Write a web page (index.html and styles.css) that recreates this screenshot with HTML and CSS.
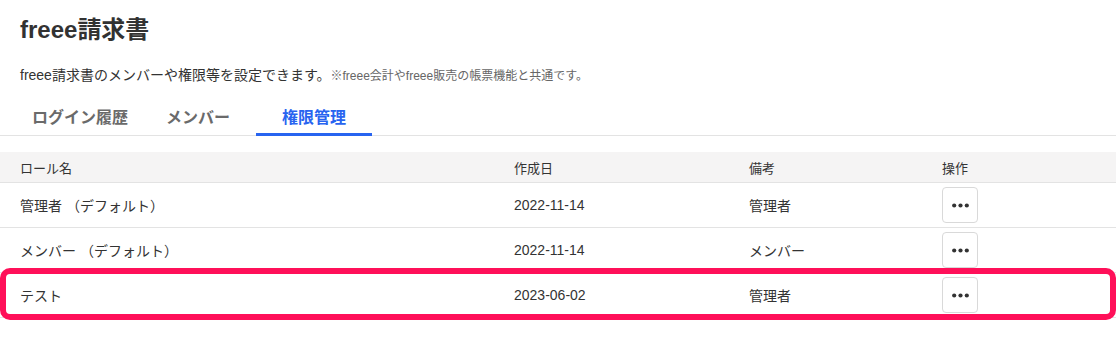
FILE: index.html
```html
<!DOCTYPE html>
<html lang="ja">
<head>
<meta charset="utf-8">
<title>freee請求書</title>
<link rel="stylesheet" href="styles.css">
</head>
<body>
<div class="page">
  <h1 class="title">freee請求書</h1>
  <p class="desc">freee請求書のメンバーや権限等を設定できます。<span class="note">※freee会計やfreee販売の帳票機能と共通です。</span></p>
  <nav class="tabs">
    <span class="tab">ログイン履歴</span>
    <span class="tab">メンバー</span>
    <span class="tab active">権限管理</span>
  </nav>
  <div class="table">
    <div class="row head">
      <div class="cell">ロール名</div>
      <div class="cell">作成日</div>
      <div class="cell">備考</div>
      <div class="cell">操作</div>
    </div>
    <div class="row">
      <div class="cell">管理者 （デフォルト）</div>
      <div class="cell">2022-11-14</div>
      <div class="cell">管理者</div>
      <div class="cell"><button class="more" type="button"><svg width="17" height="5" viewBox="0 0 17 5"><circle cx="2.2" cy="2.5" r="2.1"/><circle cx="8.5" cy="2.5" r="2.1"/><circle cx="14.8" cy="2.5" r="2.1"/></svg></button></div>
    </div>
    <div class="row">
      <div class="cell">メンバー （デフォルト）</div>
      <div class="cell">2022-11-14</div>
      <div class="cell">メンバー</div>
      <div class="cell"><button class="more" type="button"><svg width="17" height="5" viewBox="0 0 17 5"><circle cx="2.2" cy="2.5" r="2.1"/><circle cx="8.5" cy="2.5" r="2.1"/><circle cx="14.8" cy="2.5" r="2.1"/></svg></button></div>
    </div>
    <div class="row highlighted">
      <div class="cell">テスト</div>
      <div class="cell">2023-06-02</div>
      <div class="cell">管理者</div>
      <div class="cell"><button class="more" type="button"><svg width="17" height="5" viewBox="0 0 17 5"><circle cx="2.2" cy="2.5" r="2.1"/><circle cx="8.5" cy="2.5" r="2.1"/><circle cx="14.8" cy="2.5" r="2.1"/></svg></button></div>
      <span class="highlight-frame"></span>
    </div>
  </div>
</div>
</body>
</html>
```

FILE: styles.css
```css
* {
  box-sizing: border-box;
}

html, body {
  margin: 0;
  padding: 0;
  background: #ffffff;
}

body {
  font-family: "Liberation Sans", Arial, "Noto Sans CJK JP", sans-serif;
  color: #333333;
  width: 1116px;
  height: 341px;
  overflow: hidden;
}

.page {
  display: flex;
  flex-direction: column;
}

.title {
  margin: 0;
  padding: 14px 0 0 20px;
  font-size: 24px;
  line-height: 32px;
  font-weight: 700;
  color: #323232;
}

.desc {
  margin: 19px 0 0 0;
  padding-left: 20px;
  font-size: 14px;
  line-height: 20px;
  color: #333333;
}

.note {
  font-size: 12px;
  color: #666666;
}

.tabs {
  display: flex;
  margin-top: 17px;
  padding-left: 20px;
  border-bottom: 1px solid #e3e3e3;
  height: 33px;
}

.tab {
  min-width: 116px;
  padding: 4px 12px 4px;
  text-align: center;
  font-size: 16px;
  line-height: 22px;
  font-weight: 700;
  color: #6a6a6a;
  border-bottom: 3px solid transparent;
  height: 33px;
}

.tab.active {
  color: #2864f0;
  border-bottom-color: #2864f0;
}

.table {
  margin-top: 16px;
}

.row {
  display: grid;
  grid-template-columns: 494px 235px 193px 1fr;
  align-items: center;
  height: 45px;
  border-bottom: 1px solid #e3e3e3;
  font-size: 14px;
  color: #333333;
  position: relative;
}

.row.head {
  height: 31px;
  background: #f5f4f4;
  font-size: 13px;
}

.cell {
  padding-left: 20px;
}

.more {
  display: flex;
  align-items: center;
  justify-content: center;
  width: 36px;
  height: 36px;
  padding: 0;
  background: #ffffff;
  border: 1px solid #d9d9d9;
  border-radius: 4px;
}

.more svg {
  fill: #333333;
}

.highlight-frame {
  position: absolute;
  left: 0;
  right: 0;
  top: -5px;
  height: 52px;
  border: 6px solid #ff1059;
  border-radius: 10px;
  pointer-events: none;
}
```
